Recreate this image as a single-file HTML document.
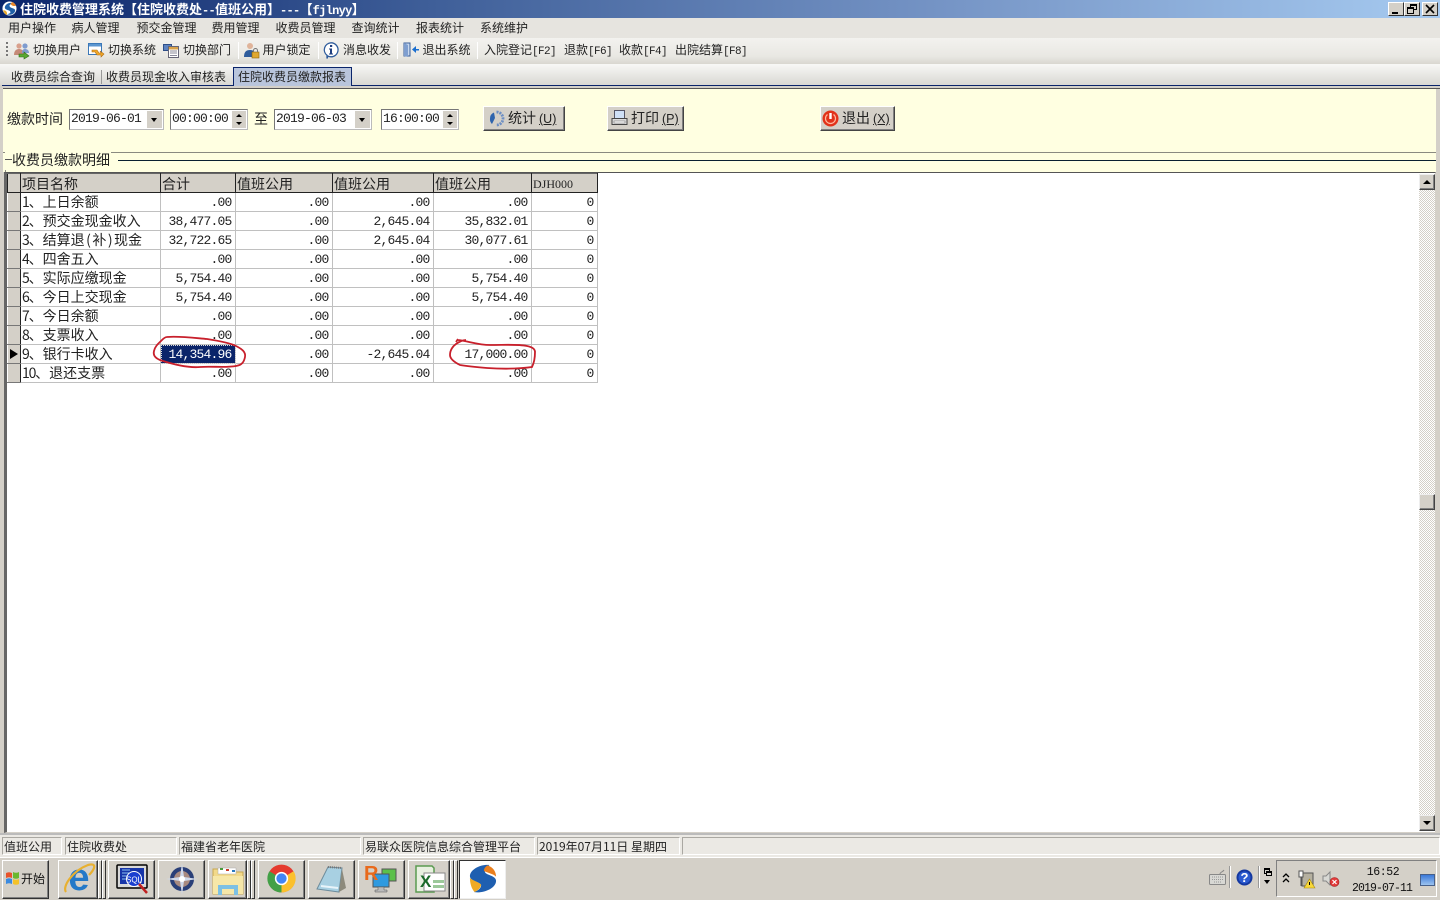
<!DOCTYPE html>
<html><head><meta charset="utf-8"><style>
*{box-sizing:border-box}
html,body{margin:0;padding:0;width:1440px;height:900px;overflow:hidden;background:#d4d0c8}
body{position:relative;font-family:"Liberation Mono","Noto Sans CJK SC",monospace;color:#111}
.a{position:absolute;white-space:nowrap}
.m{font:12px/20px "Noto Sans CJK SC",sans-serif;top:18px;color:#222}
.t{font:12px/20px "Noto Sans CJK SC",sans-serif;top:40px;color:#222}
.fk{font:11px/20px "Liberation Mono",monospace;letter-spacing:-.6px}
.tb{font:12px/20px "Noto Sans CJK SC",sans-serif;top:67px;color:#222}
.f{font:14px/20px "Noto Sans CJK SC",sans-serif}
.in{background:#fff;border:1px solid #777;border-right-color:#bbb;border-bottom-color:#bbb;height:21px;top:109px;font:13px/18px "Liberation Mono",monospace;letter-spacing:-.8px;padding-left:1px;color:#222}
.dd{position:absolute;top:1px;bottom:1px;right:1px;width:15px;background:#d4d0c8}
.dd:after{content:"";position:absolute;left:4px;top:7px;border:3.500px solid transparent;border-top:4px solid #000;border-bottom:0}
.sp{position:absolute;top:1px;bottom:1px;right:1px;width:14px;background:#d4d0c8}
.sp:before{content:"";position:absolute;left:4px;top:3px;border:3px solid transparent;border-bottom:3px solid #000;border-top:0}
.sp:after{content:"";position:absolute;left:4px;bottom:3px;border:3px solid transparent;border-top:3px solid #000;border-bottom:0}
.btn{top:106px;height:25px;background:#d4d0c8;border:1px solid;border-color:#fff #444 #444 #fff;box-shadow:inset -1px -1px #808080;font:14px/23px "Noto Sans CJK SC",sans-serif;color:#222}
.btn u{font:12.500px/23px "Liberation Sans",sans-serif;margin-left:3px}
table{position:absolute;left:7px;top:173px;border-collapse:collapse;table-layout:fixed;width:591px;font:13px/17px "Liberation Mono",monospace;letter-spacing:-.8px;color:#222}
td,th{padding:1px 3.500px 0 2px;height:19px;border:1px solid #c0c0c0;text-align:right;overflow:hidden;white-space:nowrap;font-weight:400}
th{background:#d4d0c8;border:1px solid #222;border-top-color:#666;text-align:left;font:14px/16px "Noto Sans CJK SC",sans-serif;letter-spacing:0;padding:2px 1px 0}
td.n{text-align:left;font:14px/17px "Noto Sans CJK SC",sans-serif;letter-spacing:0;padding:1px 1px 0}
td.n b{font-weight:400;letter-spacing:-1.200px}
td.n i{font-style:normal;padding:0 1.500px}
td.i{background:#d4d0c8;border:1px solid #fff;border-right:1px solid #222;border-bottom:1px solid #777;padding:0}
td.s{background:#0a246a;color:#fff;outline:1px dotted #ddd;outline-offset:-1px}
.st{top:837px;height:18px;font:12px/17px "Noto Sans CJK SC",sans-serif;border:1px solid;border-color:#aaa8a2 #fff #fff #aaa8a2;padding-left:1px;color:#222}
.tk{top:860px;height:39px;background:#d4d0c8;border:1px solid;border-color:#fff #333 #333 #fff;box-shadow:inset -1px -1px #808080}
.sepb{top:860px;height:39px;width:4px;border:1px solid;border-color:#fff #333 #333 #fff;background:#d4d0c8}
.tsep{top:42px;width:1px;height:17px;background:#aaa;border-right:1px solid #fff}
.wb{top:2px;height:14px;width:16px;background:#d4d0c8;border:1px solid;border-color:#fff #333 #333 #fff}
.chk{background-color:#fff;background-image:conic-gradient(#d4d0c8 25%,#fff 0 50%,#d4d0c8 0 75%,#fff 0);background-size:2px 2px}
.sb{left:1419px;width:16px;height:16px;background:#d4d0c8;border:1px solid;border-color:#eee #444 #444 #eee;box-shadow:inset -1px -1px #808080}
.as{font:700 12px/18px "Liberation Mono",monospace;letter-spacing:-.7px}
svg{position:absolute;overflow:visible}
</style></head><body>

<!-- title bar -->
<div class="a" style="left:0;top:0;width:1440px;height:18px;background:linear-gradient(90deg,#0a246a 0,#3f5f99 30%,#7695c6 66%,#a6caf0 100%)"></div>
<svg style="left:2px;top:1px" width="15" height="15" viewBox="0 0 16 16"><circle cx="8" cy="8" r="7.500" fill="#fff"/><path d="M12 2C7 1 3 4 3 7c0 3 6 2 6 5 0 1-2 2-4 2 5 2 9-1 9-4 0-3-6-2-6-5 0-1 2-2 4-3z" fill="#1f5fa8"/><path d="M11 1c2 1 3 2 4 4-2 1-5 0-6-2z" fill="#e8852a"/><path d="M1 10c1 2 2 4 4 5 1-2 0-4-2-5z" fill="#e8a92a"/></svg>
<div class="a" style="left:20px;top:0;font:700 13px/18px 'Noto Sans CJK SC',sans-serif;color:#fff">住院收费管理系统【住院收费处<span class="as">--</span>值班公用】<span class="as">---</span>【<span class="as">fjlnyy</span>】</div>
<div class="a wb" style="left:1388px"><div class="a" style="left:3px;top:9px;width:6px;height:2px;background:#000"></div></div>
<div class="a wb" style="left:1404px"><div class="a" style="left:5px;top:1px;width:7px;height:6px;border:1px solid #000;border-top-width:2px"></div><div class="a" style="left:2px;top:4px;width:7px;height:7px;border:1px solid #000;border-top-width:2px;background:#d4d0c8"></div></div>
<div class="a wb" style="left:1422px"><svg style="left:3px;top:2px" width="8" height="8"><path d="M0 0L8 8M8 0L0 8" stroke="#000" stroke-width="1.600"/></svg></div>

<!-- menu bar -->
<div class="a" style="left:0;top:18px;width:1440px;height:20px;background:#e6e4df"></div>
<div class="a m" style="left:8px">用户操作</div><div class="a m" style="left:71.500px">病人管理</div><div class="a m" style="left:136.500px">预交金管理</div><div class="a m" style="left:211.500px">费用管理</div><div class="a m" style="left:275.500px">收费员管理</div><div class="a m" style="left:351.500px">查询统计</div><div class="a m" style="left:416px">报表统计</div><div class="a m" style="left:480px">系统维护</div>

<!-- toolbar -->
<div class="a" style="left:0;top:38px;width:1440px;height:26px;background:linear-gradient(#f3f2ef,#e9e8e3 70%,#d9d7d0)"></div>
<div class="a" style="left:6px;top:42px;width:2px;height:16px;background:repeating-linear-gradient(#777 0 2px,transparent 2px 4px)"></div>
<svg style="left:13px;top:42px" width="17" height="17" viewBox="0 0 17 17"><circle cx="6" cy="4" r="2.600" fill="#d9a08c"/><circle cx="12" cy="4" r="2.600" fill="#7f9ccf"/><path d="M1 13c0-4 2-6 5-6s5 2 5 6z" fill="#c58a78"/><path d="M9 11c0-3 1-4 3-4s4 1 4 4z" fill="#7f9ccf"/><path d="M6 12h5v-2l5 4-5 3v-2H6z" fill="#5aa832" stroke="#2e6e1a" stroke-width=".6"/></svg>
<div class="a t" style="left:33px">切换用户</div>
<svg style="left:88px;top:43px" width="17" height="16" viewBox="0 0 17 16"><rect x=".5" y=".5" width="13" height="11" fill="#fff" stroke="#3b78b8"/><rect x="1" y="1" width="12" height="2.500" fill="#5c96d0"/><path d="M4 7h5l2 3h2l-1-2 4 3-3 3v-2H9L7 9H4z" fill="#f0a92a" stroke="#b06a10" stroke-width=".6"/></svg>
<div class="a t" style="left:108px">切换系统</div>
<svg style="left:163px;top:43px" width="16" height="15" viewBox="0 0 16 15"><rect x=".5" y="1.500" width="8" height="6" fill="#5c82c0" stroke="#2e4f88"/><rect x="5.500" y="3.500" width="10" height="11" fill="#fff" stroke="#667"/><rect x="6" y="4" width="9" height="2.500" fill="#d8a24a"/><path d="M7 8h7M7 10h7M7 12.500h7" stroke="#889"/></svg>
<div class="a t" style="left:183px">切换部门</div>
<div class="a tsep" style="left:238px"></div>
<svg style="left:243px;top:42px" width="17" height="17" viewBox="0 0 17 17"><circle cx="7" cy="4" r="3" fill="#e0b49a"/><path d="M1 15c0-5 2-7 6-7s5 2 5 7z" fill="#2f5c9c"/><rect x="9" y="10" width="7" height="6" fill="#e0a830" stroke="#8a6410" stroke-width=".6"/><path d="M10.500 10V8.500a2 2 0 0 1 4 0V10" fill="none" stroke="#777"/></svg>
<div class="a t" style="left:262.500px">用户锁定</div>
<div class="a tsep" style="left:318px"></div>
<svg style="left:323px;top:42px" width="16" height="17" viewBox="0 0 16 17"><path d="M8 .8a7 7 0 1 1-3 13.300L4 16.500V13.300A7 7 0 0 1 8 .8z" fill="#fff" stroke="#2f5c9c" stroke-width="1.300"/><rect x="7" y="3" width="2.200" height="2" fill="#1f3f80"/><path d="M6 6.500h3v5h1v1H6v-1h1v-4H6z" fill="#1f3f80"/></svg>
<div class="a t" style="left:343px">消息收发</div>
<div class="a tsep" style="left:397px"></div>
<svg style="left:403px;top:42px" width="16" height="15" viewBox="0 0 16 15"><path d="M1 1h6v13H1z" fill="#c8d8ee" stroke="#3a5f99"/><path d="M1 1l4 2v12l-4-1z" fill="#7f9fd0"/><path d="M16 7H13V4L9 7.500l4 3.500V8.500h3z" fill="#1a6fd0"/></svg>
<div class="a t" style="left:422.500px">退出系统</div>
<div class="a tsep" style="left:477px"></div>
<div class="a t" style="left:484px">入院登记<span class="fk">[F2]</span></div><div class="a t" style="left:564px">退款<span class="fk">[F6]</span></div><div class="a t" style="left:619px">收款<span class="fk">[F4]</span></div><div class="a t" style="left:675px">出院结算<span class="fk">[F8]</span></div>

<!-- tabs -->
<div class="a" style="left:0;top:64px;width:1440px;height:21px;background:linear-gradient(#f8f8f6,#d9d8d3)"></div>
<div class="a" style="left:2px;top:85px;width:1438px;height:1px;background:#0a246a"></div>
<div class="a" style="left:0;top:86px;width:1440px;height:2px;background:#d4d0c8"></div>
<div class="a" style="left:3px;top:88px;width:1437px;height:1px;background:#555"></div>
<div class="a tb" style="left:11px">收费员综合查询</div>
<div class="a" style="left:101px;top:70px;width:1px;height:14px;background:#999"></div>
<div class="a tb" style="left:106px">收费员现金收入审核表</div>
<div class="a" style="left:233px;top:67px;width:119px;height:19px;background:#b9c5dc;border:1px solid #0a246a;border-bottom:0"></div>
<div class="a tb" style="left:238px">住院收费员缴款报表</div>

<!-- filter panel -->
<div class="a" style="left:0;top:89px;width:4px;height:748px;background:#d4d0c8"></div>
<div class="a" style="left:3px;top:89px;width:1433px;height:83px;background:#ffffe1"></div>
<div class="a" style="left:1436px;top:89px;width:4px;height:744px;background:#d4d0c8"></div>
<div class="a f" style="left:7px;top:109px;color:#222">缴款时间</div>
<div class="a in" style="left:69px;width:95px">2019-06-01<div class="dd"></div></div>
<div class="a in" style="left:170px;width:78px">00:00:00<div class="sp"></div></div>
<div class="a f" style="left:254px;top:109px;color:#222">至</div>
<div class="a in" style="left:274px;width:98px">2019-06-03<div class="a" style="left:80px;top:5px;width:1px;height:9px;background:#555"></div><div class="dd"></div></div>
<div class="a in" style="left:381px;width:78px">16:00:00<div class="sp"></div></div>

<div class="a btn" style="left:483px;width:82px;padding-left:24px">统计<u>(U)</u></div>
<svg style="left:489px;top:111px" width="15" height="15" viewBox="0 0 15 15"><path d="M7.500 1a6.500 6.500 0 0 1 6.500 6.500c0 3.600-2.900 6.500-6.500 6.500" fill="none" stroke="#6d8fc4" stroke-width="2.800" stroke-dasharray="2 1"/><path d="M1 7.500A6.500 6.500 0 0 1 5 1.500L6 7l-3 6a6.500 6.500 0 0 1-2-5.500z" fill="#2f64ad"/></svg>
<div class="a btn" style="left:607px;width:77px;padding-left:23px">打印<u>(P)</u></div>
<svg style="left:611px;top:109px" width="17" height="18" viewBox="0 0 17 18"><rect x="3.500" y="1.500" width="10" height="8" fill="#cfe0f6" stroke="#556"/><path d="M1 9.500h15v6H1z" fill="#dcdcdc" stroke="#444"/><rect x="3" y="12" width="11" height="2" fill="#fff" stroke="#666" stroke-width=".5"/></svg>
<div class="a btn" style="left:820px;width:75px;padding-left:21px">退出<u>(X)</u></div>
<svg style="left:822px;top:110px" width="17" height="17" viewBox="0 0 17 17"><circle cx="8.500" cy="8.500" r="8" fill="#e2321a"/><path d="M8.500 3V9" stroke="#fff" stroke-width="2.400"/><path d="M5.500 4.500a5 5 0 1 0 6 0" fill="none" stroke="#ffb8a0" stroke-width="1.200"/></svg>

<!-- group header -->
<div class="a" style="left:3px;top:152px;width:1433px;height:1px;background:#8a8a80"></div>
<div class="a" style="left:5px;top:152px;width:1px;height:20px;background:#8a8a80"></div>
<div class="a" style="left:5px;top:150px;width:106px;height:20px;background:#ffffe1"></div>
<div class="a" style="left:5px;top:159px;width:7px;height:1px;background:#555"></div>
<div class="a f" style="left:12px;top:150px;color:#222">收费员缴款明细</div>
<div class="a" style="left:118px;top:160px;width:1318px;height:1px;background:#0a2030"></div>

<!-- grid panel -->
<div class="a" style="left:4px;top:172px;width:1432px;height:661px;background:#fff;border:1px solid;border-color:#555 #d4d0c8 #d4d0c8 #555;border-left-width:3px;border-left-color:#666"></div>
<table>
<colgroup><col style="width:13px"><col style="width:140px"><col style="width:75px"><col style="width:97px"><col style="width:101px"><col style="width:98px"><col style="width:66px"></colgroup>
<tr style="height:19px"><th></th><th>项目名称</th><th>合计</th><th>值班公用</th><th>值班公用</th><th>值班公用</th><th style="font:12px/16px 'Liberation Serif',serif">DJH000</th></tr>
<tr><td class="i"></td><td class="n"><b>1</b>、上日余额</td><td>.00</td><td>.00</td><td>.00</td><td>.00</td><td>0</td></tr>
<tr><td class="i"></td><td class="n"><b>2</b>、预交金现金收入</td><td>38,477.05</td><td>.00</td><td>2,645.04</td><td>35,832.01</td><td>0</td></tr>
<tr><td class="i"></td><td class="n"><b>3</b>、结算退<i>(</i>补<i>)</i>现金</td><td>32,722.65</td><td>.00</td><td>2,645.04</td><td>30,077.61</td><td>0</td></tr>
<tr><td class="i"></td><td class="n"><b>4</b>、四舍五入</td><td>.00</td><td>.00</td><td>.00</td><td>.00</td><td>0</td></tr>
<tr><td class="i"></td><td class="n"><b>5</b>、实际应缴现金</td><td>5,754.40</td><td>.00</td><td>.00</td><td>5,754.40</td><td>0</td></tr>
<tr><td class="i"></td><td class="n"><b>6</b>、今日上交现金</td><td>5,754.40</td><td>.00</td><td>.00</td><td>5,754.40</td><td>0</td></tr>
<tr><td class="i"></td><td class="n"><b>7</b>、今日余额</td><td>.00</td><td>.00</td><td>.00</td><td>.00</td><td>0</td></tr>
<tr><td class="i"></td><td class="n"><b>8</b>、支票收入</td><td>.00</td><td>.00</td><td>.00</td><td>.00</td><td>0</td></tr>
<tr><td class="i"></td><td class="n"><b>9</b>、银行卡收入</td><td class="s">14,354.96</td><td>.00</td><td>-2,645.04</td><td>17,000.00</td><td>0</td></tr>
<tr><td class="i"></td><td class="n"><b>10</b>、退还支票</td><td>.00</td><td>.00</td><td>.00</td><td>.00</td><td>0</td></tr>
</table>
<div class="a" style="left:10px;top:349px;border:5px solid transparent;border-left:8px solid #000;border-right:0;height:0"></div>

<svg style="left:0;top:0" width="1440" height="900" fill="none" stroke="#c8202c" stroke-width="1.800"><path d="M167 337C180 336 195 338 207 339C220 341 230 343 236 346C242 349 246 352 245 357C244 362 242 365 236 366C225 368 212 366 200 367C188 368 172 364 160 360C155 358 153 355 154 351C155 346 159 343 162 340C164 338 166 337 167 337"/><path d="M458 339L456 342M458 340C468 341 478 345 490 345C505 345 518 344 527 346C532 347 535 349 535 352C535 358 534 363 532 367C518 369 502 369 487 368C475 367 466 366 460 365C454 362 450 359 450 355C450 350 453 346 456 344C459 342 462 340 466 340"/></svg>

<!-- scrollbar -->
<div class="a chk" style="left:1419px;top:190px;width:16px;height:625px"></div>
<div class="a sb" style="top:174px"><div class="a" style="left:3px;top:5px;border:4px solid transparent;border-bottom:4px solid #000;border-top:0"></div></div>
<div class="a sb" style="top:494px"></div>
<div class="a sb" style="top:815px"><div class="a" style="left:3px;top:5px;border:4px solid transparent;border-top:4px solid #000;border-bottom:0"></div></div>

<!-- status bar -->
<div class="a" style="left:0;top:833px;width:1440px;height:24px;background:#ebe9e4"></div>
<div class="a" style="left:0;top:833px;width:1440px;height:2px;background:#bbb"></div>
<div class="a st" style="left:2px;width:60px">值班公用</div>
<div class="a st" style="left:65px;width:112px">住院收费处</div>
<div class="a st" style="left:179px;width:182px">福建省老年医院</div>
<div class="a st" style="left:363px;width:172px">易联众医院信息综合管理平台</div>
<div class="a st" style="left:537px;width:143px">2019年07月11日 星期四</div>
<div class="a st" style="left:682px;width:758px"></div>

<!-- taskbar -->
<div class="a" style="left:0;top:857px;width:1440px;height:43px;background:#d4d0c8;border-top:1px solid #fff"></div>
<div class="a tk" style="left:2px;width:47px;font:12px/35px 'Noto Sans CJK SC',sans-serif;padding-left:18px;color:#111">开始</div>
<svg style="left:5px;top:871px" width="15" height="14" viewBox="0 0 15 14"><path d="M1 2c2-1 4-1 6 0v5c-2-1-4-1-6 0z" fill="#e8532a"/><path d="M8 1c2 1 4 1 6 0v6c-2 1-4 1-6 0z" fill="#6ab82e"/><path d="M1 8c2-1 4-1 6 0v5c-2-1-4-1-6 0z" fill="#3a8ae0"/><path d="M8 8c2 1 4 1 6 0v5c-2 1-4 1-6 0z" fill="#f4c22a"/></svg>

<div class="a tk" style="left:58px;width:40px"></div><div class="a sepb" style="left:98px"></div><div class="a sepb" style="left:102px"></div>
<svg style="left:62px;top:862px" width="34" height="32" viewBox="0 0 34 32"><text x="17" y="28" text-anchor="middle" font-family="Liberation Sans,sans-serif" font-weight="700" font-size="38" fill="#2479c8">e</text><path d="M4 30C0 25 10 9 26 3c4-1 7-1 6 3-1 3-3 5-5 7" fill="none" stroke="#e8b030" stroke-width="2.200"/></svg>
<div class="a tk" style="left:108px;width:47px"></div>
<svg style="left:116px;top:864px" width="34" height="32" viewBox="0 0 34 32"><rect x="1" y="1" width="30" height="23" rx="1" fill="#d8d8d8" stroke="#000" stroke-width="1.500"/><rect x="4" y="4" width="24" height="16" fill="#1634a8"/><path d="M6 6h8M6 9h7M6 12h6M6 15h6" stroke="#8ac0f0"/><circle cx="18" cy="15" r="7.500" fill="#1a3fd0" stroke="#fff"/><text x="18" y="18.500" text-anchor="middle" font-family="Liberation Sans,sans-serif" font-size="8" fill="#fff">SQL</text><path d="M23 20l8 9" stroke="#c02020" stroke-width="2.500"/></svg>
<div class="a tk" style="left:158px;width:47px"></div>
<svg style="left:166px;top:863px" width="32" height="32" viewBox="0 0 32 32"><circle cx="16" cy="16" r="12" fill="#2a3f78"/><circle cx="16" cy="16" r="8" fill="#a88a80"/><path d="M16 0L18 14 32 16 18 18 16 32 14 18 0 16 14 14z" fill="#cfd8ea"/><circle cx="16" cy="16" r="3" fill="#fff"/></svg>
<div class="a tk" style="left:208px;width:39px"></div><div class="a sepb" style="left:247px"></div><div class="a sepb" style="left:251px"></div>
<svg style="left:212px;top:866px" width="32" height="30" viewBox="0 0 32 30"><path d="M1 3h14l2 3h14v22H1z" fill="#f2d98a" stroke="#c8a850"/><rect x="6" y="2" width="18" height="6" fill="#fff" stroke="#aaa" stroke-width=".5"/><path d="M8 2h3v2H8z" fill="#4a9a3a"/><path d="M14 3h3v2h-3z" fill="#c83a2a"/><path d="M20 4h3v2h-3z" fill="#2a7ac0"/><path d="M1 10h30v18H1z" fill="#f6e7a8"/><path d="M6 29V19h20v10h-4v-6H10v6z" fill="#7cc0e4"/></svg>

<div class="a tk" style="left:258px;width:47px"></div>
<svg style="left:267px;top:864px" width="29" height="29" viewBox="0 0 48 48"><circle cx="24" cy="24" r="23" fill="#e53a2e"/><path d="M24 24L44 12A23 23 0 0 1 24 47z" fill="#fbc02d"/><path d="M24 24L24 47A23 23 0 0 1 4 12z" fill="#43a047"/><circle cx="24" cy="24" r="11" fill="#fff"/><circle cx="24" cy="24" r="8.500" fill="#4285f4"/></svg>
<div class="a tk" style="left:308px;width:47px"></div>
<svg style="left:316px;top:864px" width="32" height="30" viewBox="0 0 32 30"><path d="M12 3L26 4 23 28 1 25z" fill="#a8d0e2" stroke="#6d8c9c"/><path d="M12 3L26 4" stroke="#777" stroke-width="2" stroke-dasharray="1 1"/><path d="M26 5L30 24 23 28z" fill="#8d8a7c"/><path d="M5 22L22 24" stroke="#e8f4fa" stroke-width="2"/></svg>
<div class="a tk" style="left:358px;width:47px"></div>
<svg style="left:364px;top:863px" width="34" height="32" viewBox="0 0 34 32"><rect x="18" y="6" width="14" height="12" fill="#5cc04a" stroke="#555"/><rect x="9" y="11" width="16" height="13" fill="#2f9ae0" stroke="#555"/><path d="M14 24h6v3h3v2H11v-2h3z" fill="#bbb" stroke="#555" stroke-width=".5"/><text x="0" y="17" font-family="Liberation Sans,sans-serif" font-weight="700" font-size="20" fill="#e86a1c">R</text></svg>
<div class="a tk" style="left:408px;width:42px"></div><div class="a sepb" style="left:450px"></div><div class="a sepb" style="left:454px"></div>
<svg style="left:414px;top:864px" width="32" height="30" viewBox="0 0 32 30"><path d="M2 2h16l2 2v24H2z" fill="#e8f0e0" stroke="#5a9a50" stroke-width="1.500"/><rect x="10" y="9" width="21" height="18" fill="#fff" stroke="#888"/><path d="M19 16h11v3H19zM19 21h11v3H19z" fill="#9cc89a"/><text x="6" y="23" font-family="Liberation Sans,sans-serif" font-weight="700" font-size="17" fill="#1a6a2a">X</text></svg>
<div class="a" style="left:459px;top:860px;width:47px;height:39px;background:#fff;border:1px solid;border-color:#333 #eee #eee #333"></div>
<svg style="left:469px;top:864px" width="28" height="29" viewBox="0 0 30 31"><path d="M22 1C12 0 1 6 1 13c0 6 12 6 12 10 0 3-4 6-8 7 10 2 24-4 24-12 0-6-12-6-12-10 0-3 2-5 5-7z" fill="#1f5fb0"/><path d="M20 1.500c6 2 9 7 9 12-3-3-9-4-13-6 0-3 2-5 4-6z" fill="#ea7f1e"/><path d="M1 15c3 3 9 4 12 7 0 3-3 6-7 8-3-3-5-9-5-15z" fill="#f0aa24"/></svg>

<!-- tray -->
<svg style="left:1209px;top:869px" width="18" height="16" viewBox="0 0 18 16"><path d="M11 5C11 3 14 3 15 1" fill="none" stroke="#888"/><rect x=".5" y="5.500" width="16" height="10" rx="1" fill="#d8d8d4" stroke="#888"/><path d="M3 8h11M3 10.500h11M5 13h7" stroke="#999" stroke-dasharray="1 1"/></svg>
<div class="a" style="left:1229px;top:866px;width:2px;height:22px;background:#999;border-right:1px solid #fff"></div>
<svg style="left:1236px;top:869px" width="17" height="17" viewBox="0 0 17 17"><circle cx="8.500" cy="8.500" r="8" fill="#1438a0"/><circle cx="8.500" cy="8.500" r="6" fill="#2a5ad0"/><text x="8.500" y="13" text-anchor="middle" font-family="Liberation Sans,sans-serif" font-weight="700" font-size="13" fill="#fff">?</text></svg>
<div class="a" style="left:1258px;top:866px;width:2px;height:22px;background:#999;border-right:1px solid #fff"></div>
<div class="a" style="left:1264px;top:868px;width:6px;height:6px;border:1px solid #000;border-top-width:2px"></div>
<div class="a" style="left:1266px;top:871px;width:6px;height:5px;border:1px solid #000;border-top-width:2px;background:#d4d0c8"></div>
<div class="a" style="left:1264px;top:880px;border:3px solid transparent;border-top:4px solid #000;border-bottom:0"></div>
<div class="a" style="left:1276px;top:860px;width:161px;height:37px;border:1px solid;border-color:#808080 #fff #fff #808080"></div>
<svg style="left:1282px;top:873px" width="8" height="10"><path d="M1 4L4 1 7 4M1 9L4 6 7 9" fill="none" stroke="#000" stroke-width="1.300"/></svg>
<svg style="left:1298px;top:870px" width="18" height="18" viewBox="0 0 18 18"><rect x="4" y="3" width="11" height="13" fill="#b5b0a0" stroke="#555"/><path d="M1 1h4v6H1z" fill="#fff" stroke="#555"/><path d="M3 7v9" stroke="#555"/><path d="M11.500 9L17 18H6z" fill="#f8d838" stroke="#a88a10" stroke-width=".6"/><path d="M11.500 12v3" stroke="#000"/></svg>
<svg style="left:1322px;top:871px" width="18" height="17" viewBox="0 0 18 17"><path d="M1 5h3l4-4v13L4 10H1z" fill="#d8d8d4" stroke="#888"/><circle cx="12.500" cy="11" r="4.500" fill="#e23a3a" stroke="#a02020" stroke-width=".6"/><path d="M10.500 9l4 4M14.500 9l-4 4" stroke="#fff" stroke-width="1.200"/></svg>
<div class="a" style="left:1352px;top:866px;width:62px;text-align:center;font:11.500px/14px 'Liberation Mono',monospace;color:#111;letter-spacing:-.4px">16:52</div>
<div class="a" style="left:1352px;top:882px;width:60px;text-align:center;font:11.500px/14px 'Liberation Mono',monospace;color:#111;letter-spacing:-.9px">2019-07-11</div>
<div class="a" style="left:1420px;top:874px;width:15px;height:12px;background:linear-gradient(#3a78d8,#9cc4f0);border:1px solid #47608a"></div>
</body></html>
